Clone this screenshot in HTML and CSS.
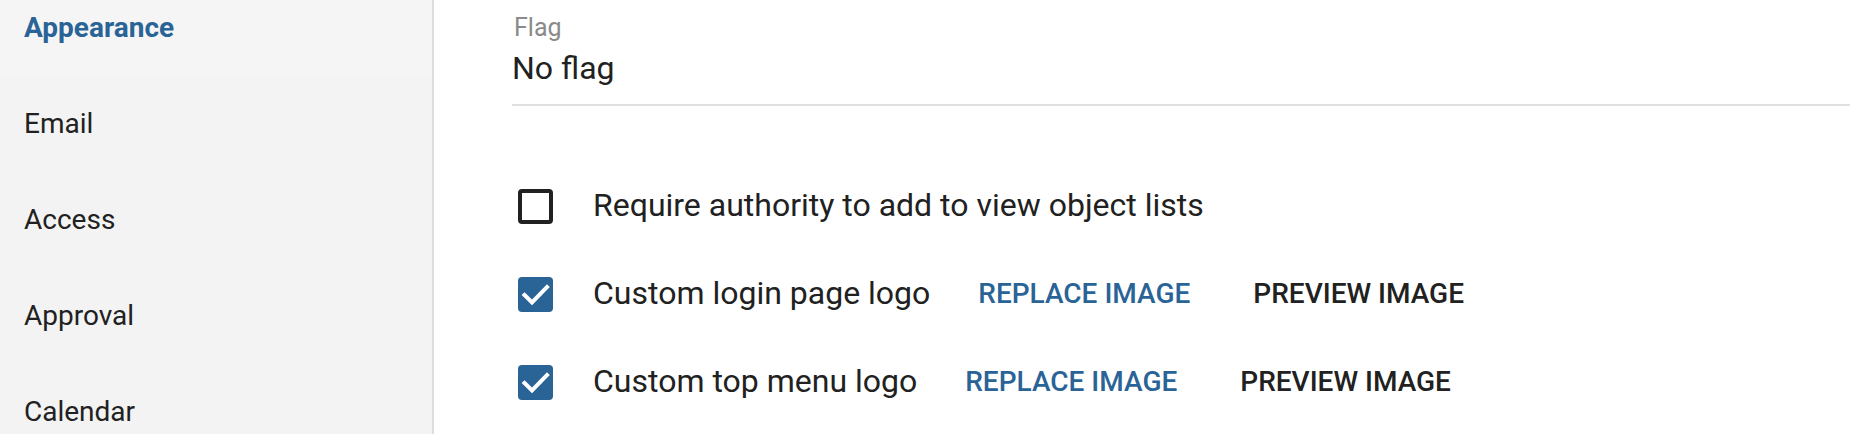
FILE: index.html
```html
<!DOCTYPE html>
<html lang="en">
<head>
<meta charset="utf-8">
<title>Settings</title>
<link rel="stylesheet" href="styles.css">
</head>
<body>
<div class="page">
  <aside class="sidebar">
    <nav class="nav">
      <div class="nav-item active">Appearance</div>
      <div class="nav-item">Email</div>
      <div class="nav-item">Access</div>
      <div class="nav-item">Approval</div>
      <div class="nav-item">Calendar</div>
    </nav>
  </aside>
  <main class="main">
    <div class="field">
      <div class="field-label">Flag</div>
      <div class="field-value">No flag</div>
    </div>
    <div class="options">
      <div class="option">
        <span class="checkbox"></span>
        <span class="option-label">Require authority to add to view object lists</span>
      </div>
      <div class="option">
        <span class="checkbox checked">
          <svg viewBox="0 0 35 35" width="35" height="35"><polyline points="6.5,18 14,25.5 29,10" fill="none" stroke="#fff" stroke-width="4" stroke-linecap="square"/></svg>
        </span>
        <span class="option-label">Custom login page logo</span>
        <button class="btn btn-primary">REPLACE IMAGE</button>
        <button class="btn">PREVIEW IMAGE</button>
      </div>
      <div class="option">
        <span class="checkbox checked">
          <svg viewBox="0 0 35 35" width="35" height="35"><polyline points="6.5,18 14,25.5 29,10" fill="none" stroke="#fff" stroke-width="4" stroke-linecap="square"/></svg>
        </span>
        <span class="option-label">Custom top menu logo</span>
        <button class="btn btn-primary">REPLACE IMAGE</button>
        <button class="btn">PREVIEW IMAGE</button>
      </div>
    </div>
  </main>
</div>
</body>
</html>
```

FILE: styles.css
```css
html, body {
  margin: 0;
  padding: 0;
  background: #ffffff;
}

body {
  font-family: Roboto, "Liberation Sans", sans-serif;
  color: #212121;
}

.page {
  display: flex;
  height: 434px;
  overflow: hidden;
}

.sidebar {
  width: 432px;
  flex-shrink: 0;
  background: #f3f3f3;
  border-right: 2px solid #dddddd;
  overflow: hidden;
}

.nav {
  margin-top: -20px;
}

.nav-item {
  height: 96px;
  line-height: 96px;
  padding-left: 24px;
  font-size: 28px;
  color: #212121;
}

.nav-item.active {
  background: #f5f5f5;
  color: #2a6496;
  font-weight: 700;
}

.main {
  flex: 1;
  padding-left: 78px;
}

.field {
  padding-top: 12px;
  padding-bottom: 16px;
  border-bottom: 2px solid #e0e0e0;
}

.field-label {
  padding-left: 2px;
  font-size: 25px;
  line-height: 32px;
  color: #8a8a8a;
}

.field-value {
  margin-top: 4px;
  font-size: 32px;
  line-height: 40px;
  color: #212121;
}

.options {
  margin-top: 56px;
}

.option {
  display: flex;
  align-items: center;
  height: 88px;
  padding-left: 6px;
}

.checkbox {
  width: 35px;
  height: 35px;
  box-sizing: border-box;
  border: 4px solid #212121;
  border-radius: 4px;
  flex-shrink: 0;
  display: flex;
}

.checkbox.checked {
  border: none;
  background: #2a6496;
}

.option-label {
  margin-left: 40px;
  margin-right: 32px;
  margin-bottom: 3px;
  font-size: 32px;
  white-space: nowrap;
}

.btn {
  font-family: Roboto, "Liberation Sans", sans-serif;
  font-size: 28px;
  font-weight: 500;
  color: #212121;
  background: none;
  border: none;
  padding: 0 16px;
  line-height: 40px;
  white-space: nowrap;
}

.btn-primary {
  color: #2a6496;
}

.btn + .btn {
  margin-left: 31px;
}
```
